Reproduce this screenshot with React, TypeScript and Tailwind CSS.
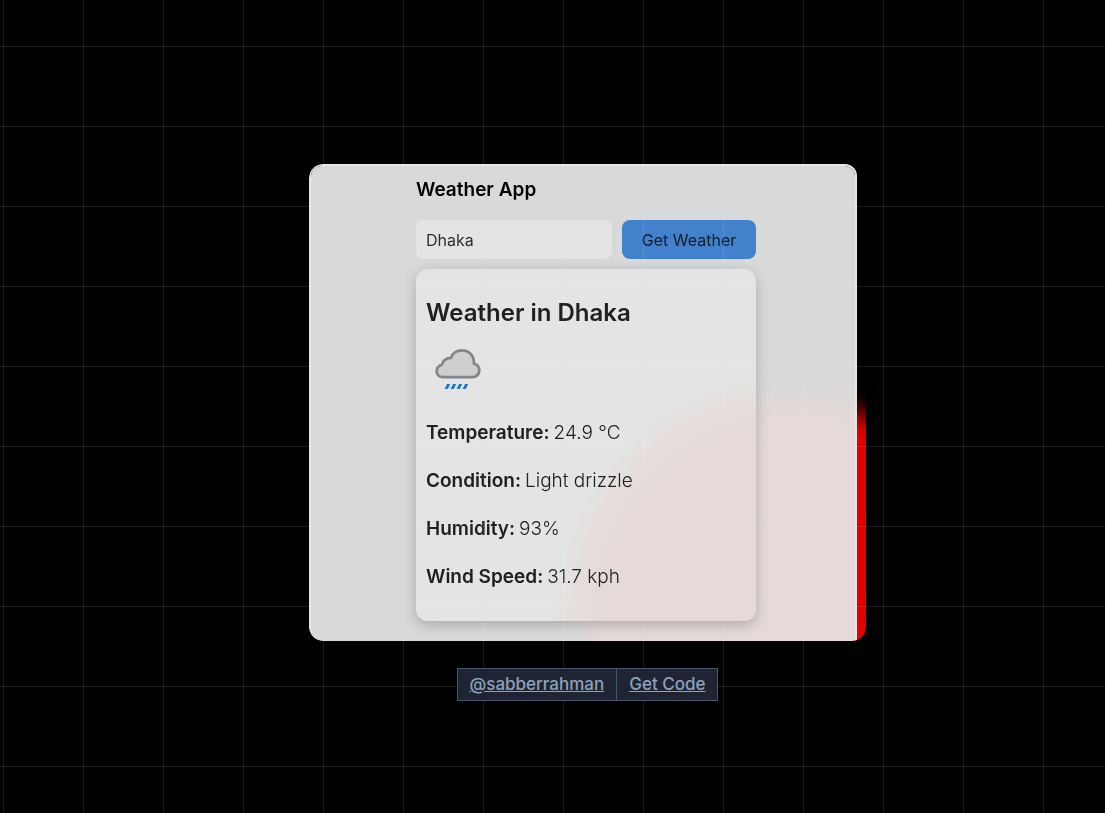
import { useState } from "react";

const readings = [
  { label: "Temperature:", value: "24.9 °C" },
  { label: "Condition:", value: "Light drizzle" },
  { label: "Humidity:", value: "93%" },
  { label: "Wind Speed:", value: "31.7 kph" },
];

function DrizzleIcon() {
  return (
    <svg viewBox="0 0 64 64" className="size-16" role="img" aria-label="Light drizzle">
      <path
        d="M17 40.2C13.300 40.200 10.700 37.600 10.700 34.200C10.700 31 12.800 28.600 15.800 27.900C16.400 23.700 20.300 20.800 25 20.800C26.300 16.300 30.600 13.400 36 13.400C43 13.400 48.200 18.700 48 26.600C51.200 27.500 53.300 30 53.300 33.200C53.300 37.200 50.200 40.200 46.200 40.200Z"
        fill="#e5e6e7"
        stroke="#959595"
        strokeWidth="2.800"
        strokeLinejoin="round"
      />
      <path
        d="M21 47h3.200l-2.400 5h-3.200zM27 47h3.200l-2.400 5h-3.200zM33 47h3.200l-2.400 5h-3.200zM39 47h3.200l-2.400 5h-3.200z"
        fill="#1f86ea"
      />
    </svg>
  );
}

export default function App() {
  const [city, setCity] = useState("Dhaka");

  return (
    <div className="relative flex min-h-screen flex-col items-center justify-center bg-black pt-13 pl-[70px] font-['Inter',sans-serif]">
      <main className="relative w-full max-w-[557px] overflow-hidden rounded-[14px] pt-0.5 pr-[11px] pl-0.5 opacity-90">
        <div className="absolute -right-[148px] -bottom-[192px] size-[428px] rounded-full bg-[#ff0000] blur-[12px]" />
        <section className="relative flex justify-center rounded-t-[10px] bg-white/95 pt-2.5 pb-5 pl-1.5 outline-2 outline-white backdrop-blur-[24px]">
          <div className="w-full max-w-[340px]">
            <h1 className="text-[19px] leading-7 font-semibold text-black">Weather App</h1>
            <form className="mt-4 flex gap-2.5" onSubmit={(e) => e.preventDefault()}>
              <input
                aria-label="City"
                value={city}
                onChange={(e) => setCity(e.target.value)}
                className="h-[39px] min-w-0 flex-1 rounded-lg bg-[#fefefe] px-2.5 text-base text-[#333333] outline-none"
              />
              <button
                type="submit"
                className="h-[39px] w-[134px] rounded-lg bg-[#4a90e2] text-base text-[#14202e]"
              >
                Get Weather
              </button>
            </form>
            <article className="mt-2.5 rounded-xl bg-[radial-gradient(circle_at_384px_350px,#fff2f2_200px,#fefefc_246px,#fefefe_280px)] px-2.5 pt-7 pb-[30px] text-[#242424] shadow-[0_4px_14px_rgba(0,0,0,0.22)]">
              <h2 className="text-2xl leading-8 font-semibold">Weather in Dhaka</h2>
              <div className="mt-2">
                <DrizzleIcon />
              </div>
              <dl className="mt-[18px] flex flex-col gap-5 text-[19px] leading-7">
                {readings.map((r) => (
                  <div key={r.label} className="flex gap-1">
                    <dt className="font-semibold">{r.label}</dt>
                    <dd className="font-light">{r.value}</dd>
                  </div>
                ))}
              </dl>
            </article>
          </div>
        </section>
      </main>
      <nav className="relative z-10 mt-[27px] flex divide-x divide-slate-600 border border-slate-600 bg-[#1e2433] text-[17px] leading-[31px] font-medium text-slate-400">
        <a href="#profile" className="px-3 underline">
          @sabberrahman
        </a>
        <a href="#code" className="px-3 underline">
          Get Code
        </a>
      </nav>
      <div className="pointer-events-none absolute inset-0 bg-[linear-gradient(to_right,rgba(255,255,255,0.1)_1px,transparent_1px),linear-gradient(to_bottom,rgba(255,255,255,0.1)_1px,transparent_1px)] bg-[length:80px_80px] bg-[position:3px_46px]" />
    </div>
  );
}
